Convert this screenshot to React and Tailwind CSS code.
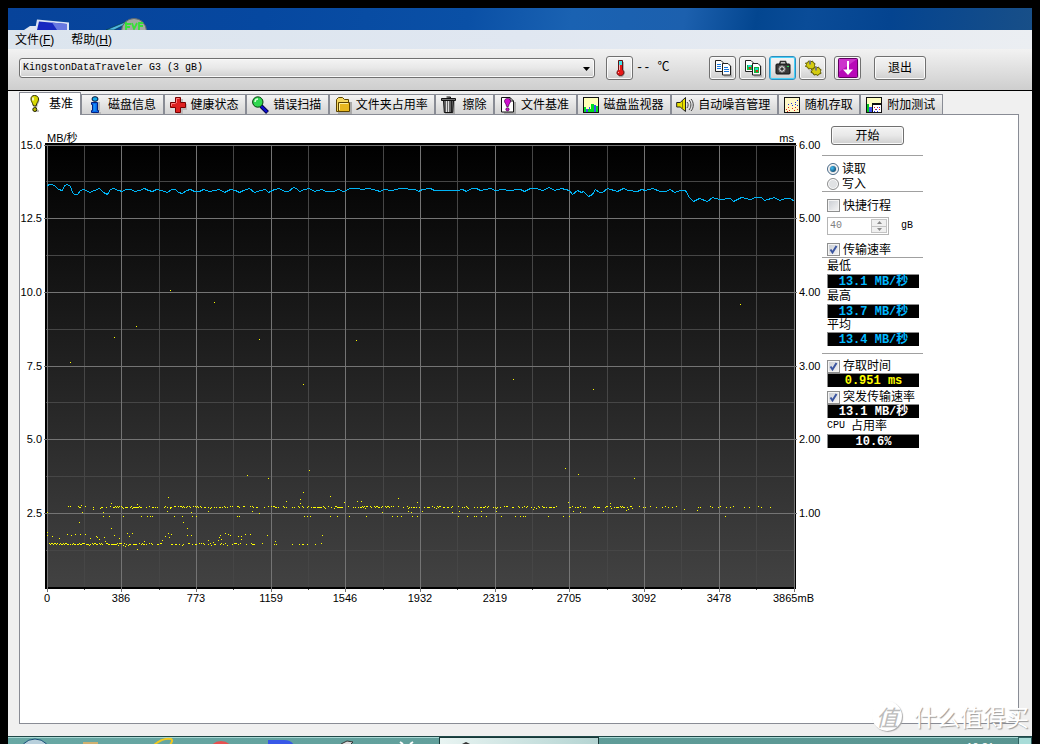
import React, { useState } from 'react';

/* ---------- chart data ---------- */
const MAJOR_X = [47, 121, 196, 271, 345, 420, 495, 569, 644, 719, 794];
const MINOR_X = [84, 159, 233, 308, 383, 457, 532, 607, 681, 756];
const MAJOR_Y = [145, 218, 292, 366, 439, 513];
const MINOR_Y = [181, 255, 329, 402, 476, 550];
const X_LABELS = ['0', '386', '773', '1159', '1546', '1932', '2319', '2705', '3092', '3478'];
const LEFT_LABELS = ['15.0', '12.5', '10.0', '7.5', '5.0', '2.5'];
const RIGHT_LABELS = ['6.00', '5.00', '4.00', '3.00', '2.00', '1.00'];

const TRANSFER =
  '47,185 49,184 52,184 55,186 58,189 62,190 64,185 67,184 70,186 72,192 74,194 77,194 80,190 83,189 86,190 89,192 94,190 99,188 103,192 107,194 110,189 113,188 118,190 122,191 125,189 131,189 134,191 139,190 144,188 148,190 152,191 156,189 161,190 167,192 171,189 175,189 178,192 182,193 186,190 190,189 194,191 199,191 203,189 209,191 214,190 219,189 224,192 230,189 235,190 239,192 243,190 249,188 254,192 260,190 265,189 268,192 274,189 279,188 284,191 288,191 293,187 296,188 299,191 304,189 309,188 314,191 321,189 326,191 333,191 338,189 343,191 350,188 358,188 361,189 368,188 377,190 379,191 384,189 391,190 400,188 415,189 418,191 422,189 430,188 434,190 457,190 462,189 466,191 471,188 476,188 480,190 490,188 495,190 503,189 508,190 520,189 524,191 530,188 536,188 542,190 549,187 554,190 561,188 569,190 572,194 577,190 581,192 583,191 588,196 592,194 595,189 599,192 602,192 607,188 617,191 623,188 628,190 637,191 641,189 645,190 652,188 660,191 665,191 670,189 674,192 680,190 685,190 689,197 693,201 699,198 707,201 712,197 719,199 730,198 733,201 741,197 750,199 755,197 761,197 764,200 774,197 779,200 785,198 790,198 794,201';

const SCATTER = [
  [170, 290], [214, 302], [114, 337], [136, 326], [70, 362], [259, 339], [303, 384], [356, 340], [513, 379],
  [593, 389], [740, 304], [247, 475], [268, 478], [309, 470], [565, 468], [578, 474], [634, 478], [168, 497],
  [303, 492], [330, 496], [357, 501], [361, 501], [398, 498], [286, 501], [300, 499], [300, 503], [111, 503],
  [81, 505], [137, 504], [47, 512], [82, 512], [103, 512], [93, 509], [79, 522], [111, 528], [167, 511],
  [183, 522], [187, 528], [191, 512], [208, 511], [252, 511], [259, 513], [344, 502], [382, 512], [47, 532],
  [47, 535], [52, 536], [59, 538], [67, 534], [71, 535], [75, 534], [80, 534], [85, 534], [90, 538], [96, 536],
  [97, 537], [99, 539], [104, 537], [105, 541], [114, 535], [119, 538], [127, 533], [129, 536], [132, 533],
  [125, 546], [137, 549], [144, 541], [165, 536], [168, 533], [171, 534], [169, 537], [162, 540], [187, 535],
  [191, 535], [208, 540], [213, 542], [218, 540], [219, 537], [220, 535], [221, 539], [225, 533], [228, 534],
  [230, 535], [238, 536], [241, 536], [241, 539], [245, 534], [250, 534], [267, 535], [275, 541], [322, 535],
  [417, 502], [568, 502], [610, 503], [411, 512], [408, 511], [422, 511], [452, 512], [459, 511], [481, 511],
  [496, 511], [533, 509], [573, 511], [580, 512], [603, 511], [626, 510], [628, 509], [697, 510], [684, 509],
];
const ROW_516 = [103, 109, 123, 141, 147, 150, 152, 174, 182, 192, 196, 237, 239, 304, 307, 310, 330, 337, 349, 366, 392, 397, 401, 412, 417, 458, 467, 474, 476, 481, 486, 501, 515, 520, 523, 525, 548, 563, 569, 725];
const ROW_507 = [639, 643, 645, 650, 656, 662, 665, 668, 672, 676, 698, 700, 710, 712, 718, 720, 726, 730, 733, 744, 749, 758, 761, 770];

// [from, to, share of filled pixels, row]
const BANDS = [
  [68, 86, 0.3, 507], [93, 112, 0.3, 507], [113, 138, 0.6, 507], [139, 170, 0.42, 507], [170, 202, 0.6, 507],
  [203, 245, 0.42, 507], [250, 292, 0.5, 507], [293, 325, 0.62, 507], [328, 440, 0.6, 507], [441, 530, 0.42, 507],
  [531, 605, 0.36, 507], [606, 632, 0.5, 507],
  [49, 94, 0.85, 544], [95, 130, 0.75, 544], [131, 161, 0.4, 544], [169, 198, 0.55, 544], [199, 240, 0.3, 544], [241, 321, 0.2, 544],
];

function makeBands() {
  let seed = 20711;
  const next = () => {
    seed = (seed * 16807) % 2147483647;
    return seed / 2147483647;
  };
  const out = [];
  BANDS.forEach(([a, b, share, row]) => {
    for (let x = a; x <= b; x += 1) {
      if (next() < share) {
        const r = next();
        out.push([x, row + (r < 0.35 ? -1 : r > 0.94 ? 1 : 0)]);
      }
    }
  });
  return out;
}
const DOTS = [...SCATTER, ...ROW_516.map((x) => [x, 516]), ...ROW_507.map((x, i) => [x, i % 3 ? 507 : 506]), ...makeBands()];
const DOT_PATH = DOTS.map(([x, y]) => `M${x} ${y}h1v1h-1z`).join('');

function Chart() {
  return (
    <svg viewBox="20 115 802 495" className="block w-full font-['Liberation_Sans','Noto_Sans_CJK_SC',sans-serif] text-[11px]" role="img" aria-label="基准">
      <defs>
        <linearGradient id="plot" x1="0" y1="0" x2="0" y2="1">
          <stop offset="0" stopColor="#000" />
          <stop offset="1" stopColor="#424242" />
        </linearGradient>
      </defs>
      <rect x="45" y="143" width="751" height="446" fill="#000" />
      <rect x="47" y="145" width="748" height="442" fill="url(#plot)" />
      <g shapeRendering="crispEdges">
        {MINOR_X.map((x) => <rect key={x} x={x} y="145" width="1" height="445" fill="#464646" />)}
        {MINOR_Y.map((y) => <rect key={y} x="46" y={y} width="749" height="1" fill="#464646" />)}
        {MAJOR_X.map((x) => <rect key={x} x={x} y="145" width="1" height="446" fill="#747474" />)}
        {MAJOR_Y.map((y) => <rect key={y} x="44" y={y} width="753" height="1" fill="#747474" />)}
        <rect x="45" y="587" width="751" height="2" fill="#000" />
        {MAJOR_X.map((x) => <rect key={x} x={x} y="587" width="1" height="5" fill="#747474" />)}
        <path d={DOT_PATH} fill="#ffff00" />
        <polyline points={TRANSFER} transform="translate(0.5 0.5)" fill="none" stroke="#00b4f5" strokeWidth="1" />
      </g>
      <text x="47" y="142">MB/秒</text>
      <text x="794" y="142" textAnchor="end">ms</text>
      {LEFT_LABELS.map((t, i) => <text key={t} x="42" y={MAJOR_Y[i] + 4} textAnchor="end">{t}</text>)}
      {RIGHT_LABELS.map((t, i) => <text key={t} x="799" y={MAJOR_Y[i] + 4}>{t}</text>)}
      {X_LABELS.map((t, i) => <text key={t} x={MAJOR_X[i]} y="602" textAnchor="middle">{t}</text>)}
      <text x="773" y="602">3865mB</text>
    </svg>
  );
}

/* ---------- icons ---------- */
function Svg({ size = 18, children, className = '' }) {
  return (
    <svg width={size} height={size} viewBox="0 0 18 18" className={`shrink-0 ${className}`} aria-hidden="true">
      {children}
    </svg>
  );
}
const BangIcon = () => (
  <Svg>
    <path d="M11 2c3 1 3 5 1 7l-1 4h-2zM8 15h5v2H8z" fill="#bbb" />
    <path d="M8.500 .5C6 .5 5 2 5 4c0 2 1 3 1.500 4.500L7.500 11h2.500l.8-2.500C11.500 7 12.500 6 12.500 4c0-2-1.500-3.500-4-3.500z" fill="#d8d800" stroke="#2a2a00" />
    <path d="M7 2.500v3" stroke="#fff" strokeWidth="1.500" />
    <circle cx="8.800" cy="14.500" r="2" fill="#b9b900" stroke="#222200" />
  </Svg>
);
const InfoIcon = () => (
  <Svg>
    <path d="M7 16h8v2H7zM12 6h2v9h-2z" fill="#bbb" />
    <ellipse cx="9" cy="3" rx="3" ry="2.300" fill="#16a8e8" stroke="#013" />
    <path d="M5.500 6.500h6v8h1v2h-7v-2h1v-6h-1z" fill="#0868e8" stroke="#002080" />
    <path d="M7.500 8h2v7h-2z" fill="#1890f8" />
  </Svg>
);
const CrossIcon = () => (
  <Svg>
    <path d="M8 3h6v5h4v6h-4v4H8z" fill="#bbb" />
    <path d="M6.500 1.500h5v5h5v5h-5v5h-5v-5h-5v-5h5z" fill="#dd2020" stroke="#700" />
    <path d="M7.500 7V2.500h3M2.500 10V7.500h4" fill="none" stroke="#ff8080" />
  </Svg>
);
const LensIcon = () => (
  <Svg>
    <path d="M10 10l6.500 6.500" stroke="#000040" strokeWidth="4" />
    <path d="M10 10l6 6" stroke="#1010d0" strokeWidth="2.400" />
    <circle cx="6.800" cy="6" r="5.200" fill="#30d850" stroke="#054010" />
    <path d="M4 6c0-2 1-3 3-3" stroke="#d8ffd8" strokeWidth="1.500" fill="none" />
  </Svg>
);
const FolderIcon = () => (
  <Svg>
    <path d="M4 17h13V6" stroke="#aaa" strokeWidth="2" fill="none" />
    <path d="M2.500 15.500V3.500l2-2h4l2 2h4v12z" fill="#f5d860" stroke="#5a4200" />
    <path d="M4.500 15.500v-9h11v9z" fill="#e8b820" stroke="#5a4200" />
    <path d="M5.500 14V7.500H14" stroke="#fff0a0" fill="none" />
  </Svg>
);
const TrashIcon = () => (
  <Svg>
    <path d="M5 17h9V4" stroke="#aaa" strokeWidth="2" fill="none" />
    <path d="M3.500 4.500h10l-.8 12H4.300z" fill="#666" stroke="#111" />
    <path d="M6.500 5v11M8.500 5v11" stroke="#ddd" />
    <path d="M11.500 5v11" stroke="#222" />
    <path d="M1.500 2.500h14v2h-14zM6.500 1h4v1.500" fill="#777" stroke="#111" />
  </Svg>
);
const FileBangIcon = () => (
  <Svg>
    <path d="M5 17h11V6" stroke="#aaa" strokeWidth="2" fill="none" />
    <path d="M2.500 1.500h8.500l3.500 3.500v11h-12z" fill="#fff" stroke="#111" />
    <path d="M11 1.500V5h3.500" fill="none" stroke="#111" />
    <path d="M8.500 2.500c-2 0-3 1.200-3 2.700 0 1.300 1 2 1.500 3.300l.6 2h1.800l.6-2C10.500 7.200 11.500 6.500 11.500 5.200c0-1.500-1-2.700-3-2.700z" fill="#d010d0" stroke="#400040" strokeWidth=".7" />
    <circle cx="8.500" cy="13.300" r="1.600" fill="#d010d0" stroke="#400040" strokeWidth=".7" />
  </Svg>
);
const BarsIcon = () => (
  <Svg>
    <rect x="1.500" y="1.500" width="15" height="15" fill="#ffffb8" stroke="#111" />
    <path d="M2 16v-5h2v5zM6 16v-3h3v3zM9 16V8h3v8zM14 16v-6h2v6z" fill="#00e020" />
    <path d="M4 16v-3h2v3zM7 13v-2h1v2zM12 16v-7h2v7z" fill="#4050f0" />
  </Svg>
);
const SpeakerIcon = () => (
  <Svg>
    <path d="M.7 6.500h3.500L9.500 1.500v14L4.200 11H.7z" fill="#e8e000" stroke="#222" />
    <path d="M6.500 5v8" stroke="#8a8000" />
    <path d="M11 6c1.500 1.500 1.500 4 0 6M13 4c2.500 2.500 2.500 7 0 10M15 3c3 3 3 9 0 12" stroke="#444" fill="none" />
  </Svg>
);
const DotsIcon = () => (
  <Svg>
    <rect x="1.500" y="1.500" width="15" height="15" fill="#fff8c8" stroke="#111" />
    <path d="M3 13h1v1H3zM5 11h1v1H5zM6 14h1v1H6zM9 12h1v1H9zM11 14h1v1h-1zM14 13h1v1h-1zM12 11h1v1h-1zM4 15h1v1H4z" fill="#e02020" />
    <path d="M5 8h1v1H5zM8 7h1v1H8zM9 9h1v1H9zM12 6h1v1h-1zM14 4h1v1h-1zM12 8h1v1h-1zM14 9h1v1h-1z" fill="#2030e0" />
  </Svg>
);
const ExtraIcon = () => (
  <Svg>
    <rect x="1.500" y="1.500" width="15" height="15" fill="#ffffc0" stroke="#111" />
    <path d="M2 16V8h2v8z" fill="#00c820" />
    <path d="M4 16v-5h3v5z" fill="#4050f0" />
    <rect x="7.500" y="7.500" width="9" height="9" fill="#fff" stroke="#111" />
    <path d="M8 8.500h8" stroke="#111" />
    <path d="M9 11h1v1H9zM12 11h1v1h-1zM14 13h1v1h-1zM10 13h1v1h-1z" fill="#e02020" />
    <path d="M11 13h1v1h-1zM14 11h1v1h-1zM9 15h1v1H9zM12 15h1v1h-1z" fill="#2030e0" />
  </Svg>
);
const ThermoIcon = () => (
  <Svg>
    <path d="M12 3v8c2 2 1 5-1 6H8" fill="none" stroke="#999" strokeWidth="1.500" />
    <path d="M7.500 1.500h4v9.500c2 1 2 5.500-2 5.500S5 13 7.500 11z" fill="#e81818" stroke="#611" />
    <path d="M8 2h3v4H8z" fill="#40e0e8" />
    <path d="M8.500 6v5M7.500 13v1" stroke="#ffb0b0" />
  </Svg>
);
const CopyIcon = ({ image }) => (
  <Svg>
    <path d="M10 17h8V7" fill="none" stroke="#999" />
    <path d="M1.500 1.500h5.500l2 2v9h-7.500z" fill="#fff" stroke="#222" />
    <path d="M8.500 4.500H14l2.500 2.500v9h-8z" fill="#fff" stroke="#222" />
    {image ? (
      <>
        <path d="M3 6h5v5H3zM10 8h5v6h-5z" fill="#10b840" />
        <path d="M4 6h3v2H4zM11 9h3v2h-3z" fill="#20d8d0" />
        <path d="M5 8h2v2H5zM12 11h2v2h-2z" fill="#d03010" />
      </>
    ) : (
      <path d="M3 5.500h4M3 7.500h4M3 9.500h4M10 8.500h4M10 10.500h5M10 12.500h5" stroke="#1878e0" />
    )}
  </Svg>
);
const CameraIcon = () => (
  <Svg>
    <path d="M5.500 5.500l1-3h5l1 3" fill="none" stroke="#333" strokeWidth="1.500" />
    <rect x="2" y="5" width="14" height="10" rx="1" fill="#3a3a3a" stroke="#111" />
    <circle cx="8" cy="10" r="3.200" fill="#eee" stroke="#777" />
    <circle cx="8" cy="10" r="1.800" fill="#333" />
    <path d="M13 7h2v1h-2z" fill="#20e050" />
  </Svg>
);
const GearsIcon = () => (
  <Svg>
    <path d="M6 11l3 3 2 2" fill="none" stroke="#b8b8b8" strokeWidth="2" />
    <path d="M1.500 4l2 0 1-2 2 1 2-1 1 2 1.500 .5-.5 2 1 2-2 .5-1 1.500-2-1-2 .5-1-2-2-.5 1-2z" fill="#d4cc10" stroke="#605c00" />
    <path d="M7.500 10l2 0 1-2 2 1 2-1 1 2 1.500 .5-.5 2 .5 2-2 .5-1 1.500-2-1-2 .5-1-2-2-.5 1-2z" fill="#d4cc10" stroke="#605c00" />
    <path d="M6 1.500v4M12 7.500v4" stroke="#777" strokeWidth="2" />
  </Svg>
);
const ArrowIcon = () => (
  <svg width="20" height="20" viewBox="0 0 20 20" aria-hidden="true" className="shrink-0">
    <rect x=".5" y=".5" width="19" height="19" rx="1" fill="#b808b8" stroke="#600060" />
    <path d="M1 1h18L1 14z" fill="#d850d8" opacity=".6" />
    <path d="M10 3v12" stroke="#fff" strokeWidth="2" />
    <path d="M5 11.500l5 5.500 5-5.500z" fill="#fff" />
  </svg>
);

/* ---------- controls ---------- */
const FILL = 'flex items-center justify-center rounded-[3px] border bg-linear-to-b from-[#f4f4f4] via-[#e8e8e8] to-[#cfcfcf]';
const IDLE = 'border-[#707070] shadow-[inset_0_0_0_1px_#fafafa]';
const FOCUSED = 'border-[#2c8fc0] shadow-[inset_0_0_0_1px_#48d0f8]';

function ToolButton({ label, active, children, className = '' }) {
  return (
    <button
      type="button"
      aria-label={label}
      title={label}
      className={`${FILL} ${active ? FOCUSED : IDLE} h-6 w-[27px] shrink-0 ${className}`}
    >
      {children}
    </button>
  );
}

const TABS = [
  ['基准', BangIcon], ['磁盘信息', InfoIcon], ['健康状态', CrossIcon], ['错误扫描', LensIcon], ['文件夹占用率', FolderIcon],
  ['擦除', TrashIcon], ['文件基准', FileBangIcon], ['磁盘监视器', BarsIcon], ['自动噪音管理', SpeakerIcon],
  ['随机存取', DotsIcon], ['附加测试', ExtraIcon],
];

function Check({ label, defaultChecked, className = '' }) {
  return (
    <label className={`flex items-center gap-[3px] pl-[5px] whitespace-nowrap ${className}`}>
      <span className="grid size-[13px] shrink-0">
        <input
          type="checkbox"
          defaultChecked={defaultChecked}
          className="peer col-start-1 row-start-1 size-[13px] appearance-none border border-[#8e8f8f] bg-linear-to-br from-[#c8ccd2] to-[#f6f6f6] shadow-[inset_0_0_0_1px_#f4f4f4]"
        />
        <svg viewBox="0 0 13 13" className="pointer-events-none col-start-1 row-start-1 hidden size-[13px] peer-checked:block" aria-hidden="true">
          <path d="M3.500 6.500l2 3L9.500 3" fill="none" stroke="#3a55a0" strokeWidth="2" />
        </svg>
      </span>
      {label}
    </label>
  );
}

function Radio({ label, ...rest }) {
  return (
    <label className="flex h-[15px] items-center gap-[3px] pl-[5px]">
      <input
        type="radio"
        name="mode"
        {...rest}
        className="grid size-3 shrink-0 appearance-none place-items-center rounded-full border border-[#8e8f8f] bg-[#e0e2e4] shadow-[inset_0_0_0_1px_#fff] before:hidden before:size-1.5 before:rounded-full before:bg-radial-[at_35%_35%] before:from-[#40c0f8] before:to-[#062848] before:content-[''] checked:border-[#4a6a88] checked:before:block"
      />
      {label}
    </label>
  );
}

function Reading({ color, children }) {
  return (
    <output className={`mr-1 ml-[5px] flex h-3.5 items-center justify-center border-t border-l border-[#8a8a8a] bg-black font-['Liberation_Mono','Noto_Sans_CJK_SC',monospace] text-[12px] leading-3 font-bold whitespace-pre ${color}`}>
      {children}
    </output>
  );
}

const Rule = () => <hr className="border-t border-[#a0a0a0]" />;

function Sidebar() {
  return (
    <form className="flex w-[101px] shrink-0 flex-col pt-[11px] leading-3">
      <button type="button" className={`${FILL} ${IDLE} mb-2.5 ml-[9px] h-[19px] w-[73px]`}>开始</button>
      <Rule />
      <fieldset className="pt-[5px]">
        <Radio label="读取" defaultChecked />
        <Radio label="写入" />
      </fieldset>
      <Rule />
      <Check label="快捷行程" className="mt-1.5 h-[15px]" />
      <div className="mt-1 mb-[7px] flex h-[18px] items-center gap-3 pl-[5px] font-['Liberation_Mono',monospace] text-[10px]">
        <div className="flex h-full w-[62px] border border-[#b5b5b5] p-px">
          <input aria-label="快捷行程 gB" type="text" defaultValue="40" disabled className="w-0 flex-1 pl-px text-[#808080]" />
          <div className="flex w-4 flex-col border border-[#c4c4c4] bg-[#f0f0f0]">
            <button type="button" disabled aria-label="增加" className="flex flex-1 items-center justify-center border-b border-[#c4c4c4]">
              <svg width="5" height="3" viewBox="0 0 5 3"><path d="M0 3l2.500-3L5 3z" fill="#888" /></svg>
            </button>
            <button type="button" disabled aria-label="减少" className="flex flex-1 items-center justify-center">
              <svg width="5" height="3" viewBox="0 0 5 3"><path d="M0 0l2.500 3L5 0z" fill="#888" /></svg>
            </button>
          </div>
        </div>
        <span>gB</span>
      </div>
      <Check label="传输速率" defaultChecked className="h-[15px]" />
      <Rule />
      <span className="flex h-4 items-center pl-[5px]">最低</span>
      <Reading color="text-[#00b8ff]">13.1 MB/秒</Reading>
      <span className="flex h-4 items-center pl-[5px]">最高</span>
      <Reading color="text-[#00b8ff]">13.7 MB/秒</Reading>
      <span className="flex h-3.5 items-center pl-[5px]">平均</span>
      <Reading color="text-[#00b8ff]">13.4 MB/秒</Reading>
      <div className="h-[7px]" />
      <Rule />
      <Check label="存取时间" defaultChecked className="mt-[5px] h-3.5" />
      <Reading color="text-[#ffff00]">0.951 ms</Reading>
      <Check label="突发传输速率" defaultChecked className="mt-[3px] h-3.5" />
      <Reading color="text-white">13.1 MB/秒</Reading>
      <span className="flex h-4 items-center gap-1.5 pl-[5px]">
        <span className="font-['Liberation_Mono',monospace] text-[10px]">CPU</span>占用率
      </span>
      <Reading color="text-white">10.6%</Reading>
    </form>
  );
}

export default function App() {
  const [tab, setTab] = useState(0);
  return (
    <div className="min-h-screen bg-black px-2 pt-2 font-['Liberation_Sans','Noto_Sans_CJK_SC',sans-serif] text-[12px] text-black">
      <div className="relative flex min-h-[calc(100vh-8px)] flex-col bg-[#f0f0f0]">
        <div className="h-[22px] overflow-hidden bg-[linear-gradient(100deg,#07439a_0%,#0648a0_25%,#0a50a6_45%,#1a62b2_55%,#1c60ae_66%,#034690_73%,#0a4c98_78%,#044490_86%,#184f88_100%)]">
          <svg width="150" height="22" viewBox="8 8 150 22" aria-hidden="true" className="block">
            <path d="M24 30l6-4h8v4z" fill="#dfe6f0" />
            <path d="M37 19.500l32 3V30H35z" fill="#dce4f4" />
            <path d="M39 21.500l28 2.500v6H37z" fill="#1828c0" />
            <path d="M52 22.500l15 1.500v6H57z" fill="#6878e0" />
            <path d="M106 30l18-7.500 2 1.500-12 6z" fill="#50b8e0" stroke="#033" strokeWidth=".6" />
            <circle cx="134" cy="31" r="12.500" fill="#a4aaa4" stroke="#60686a" />
            <path d="M125 24h6M125 27h5M126 22v8M132 23l2 6 3-6M139 23h4M139 26h4M139 22v8" stroke="#38e038" strokeWidth="1.800" fill="none" />
          </svg>
        </div>

        <nav className="flex h-[19px] items-center gap-[17px] bg-linear-to-r from-[#dce5ee] via-[#e0e7f1] to-[#ebeef2] pl-[7px] leading-3">
          <button type="button">文件(<u>F</u>)</button>
          <button type="button">帮助(<u>H</u>)</button>
        </nav>

        <header className="flex h-[42px] items-center border-b border-black bg-linear-to-b from-[#f2f2f2] to-[#cecece] pr-[106px] pb-1 pl-[11px]">
          <div className="relative h-5 flex-1">
            <select aria-label="磁盘" className={`${FILL} ${IDLE} h-full w-full appearance-none pl-[3px] font-['Liberation_Mono',monospace] text-[10px]`}>
              <option>KingstonDataTraveler G3 (3 gB)</option>
            </select>
            <svg width="7" height="4" viewBox="0 0 7 4" className="pointer-events-none absolute top-2 right-[5px] mt-px" aria-hidden="true">
              <path d="M0 0h7L3.500 4z" />
            </svg>
          </div>
          <ToolButton label="温度" className="ml-[11px]"><ThermoIcon /></ToolButton>
          <span className="w-[76px] shrink-0 pl-[3px] font-['Liberation_Mono','Noto_Sans_CJK_SC',monospace] leading-3 whitespace-pre">-- ℃</span>
          <div className="flex gap-[3px]">
            <ToolButton label="复制文本"><CopyIcon /></ToolButton>
            <ToolButton label="复制图像"><CopyIcon image /></ToolButton>
            <ToolButton label="截图" active><CameraIcon /></ToolButton>
            <ToolButton label="选项"><GearsIcon /></ToolButton>
          </div>
          <ToolButton label="保存" className="ml-2"><ArrowIcon /></ToolButton>
          <button type="button" className={`${FILL} ${IDLE} ml-[13px] h-6 w-[52px] shrink-0`}>退出</button>
        </header>

        <main className="flex flex-1 flex-col pt-px pr-[13px] pb-3 pl-[11px]">
          <div role="tablist" className="flex h-[22px] w-full max-w-[924px] items-end leading-3">
            {TABS.map(([name, Icon], i) => (
              <button
                key={name}
                type="button"
                role="tab"
                aria-selected={tab === i}
                onClick={() => setTab(i)}
                className={`flex items-center border border-b-0 border-[#898c95] whitespace-nowrap ${
                  tab === i ? 'z-10 -mb-px h-[23px] gap-[5px] bg-white pr-[7px] pb-px pl-1.5' : 'h-5 grow gap-1 bg-linear-to-b from-[#f4f4f4] to-[#d4d4d4] pr-1.5 pl-1'
                }`}
              >
                <Icon />
                {name}
              </button>
            ))}
          </div>
          <section className="flex flex-1 items-start border border-[#898c95] bg-white pr-[95px]">
            <div className="min-w-0 flex-1"><Chart /></div>
            <Sidebar />
          </section>
        </main>

        <footer className="flex h-2 overflow-hidden border-t border-[#204848] bg-linear-to-r from-[#68a8a4] to-[#589490] shadow-[inset_0_1px_0_#a8d8d4]">
          <svg width="431" height="7" viewBox="8 737 431 7" aria-hidden="true" className="shrink-0">
            <circle cx="35" cy="755" r="16" fill="#b8d0dc" stroke="#185078" />
            <rect x="83" y="742" width="15" height="3" fill="#d0b070" />
            <path d="M154 745c6-5 12-7 17-6 2 1 1 3-1 6" fill="none" stroke="#f0c820" strokeWidth="2" />
            <circle cx="221" cy="754" r="13" fill="#e85050" />
            <path d="M268 740h16c5 0 8 2 10 5h-26z" fill="#3858e8" />
            <path d="M341 744l6-3 6 1-3 3" fill="#ddd" stroke="#333" />
            <path d="M400 742l3 2M413 742l-3 2" stroke="#fff" strokeWidth="2" />
          </svg>
          <div className="w-40 shrink-0 border border-b-0 border-[#183838] bg-linear-to-r from-[#e8f4f2] to-[#b4d4d2]">
            <svg width="40" height="6" viewBox="0 0 40 6" aria-hidden="true"><path d="M22 6l4-2 4 2z" fill="#333" /></svg>
          </div>
          <span className="ml-auto pt-1 pr-6 text-[11px] leading-3 text-white">10:21</span>
          <div className="w-3.5 border border-b-0 border-[#306060] bg-[#a8dcd8]" />
        </footer>

        <div className="pointer-events-none absolute right-[3px] bottom-3 z-20 flex items-center gap-3 pb-px font-['Noto_Sans_CJK_SC',sans-serif] text-white">
          <span className="flex size-[30px] items-center justify-center rounded-full bg-white text-[22px] leading-6 text-[#bcbcbc] italic shadow-[1px_1px_1px_#aaa]">值</span>
          <span className="text-[23px] leading-7 [text-shadow:1px_1px_1px_#999]">什么值得买</span>
        </div>
      </div>
    </div>
  );
}
